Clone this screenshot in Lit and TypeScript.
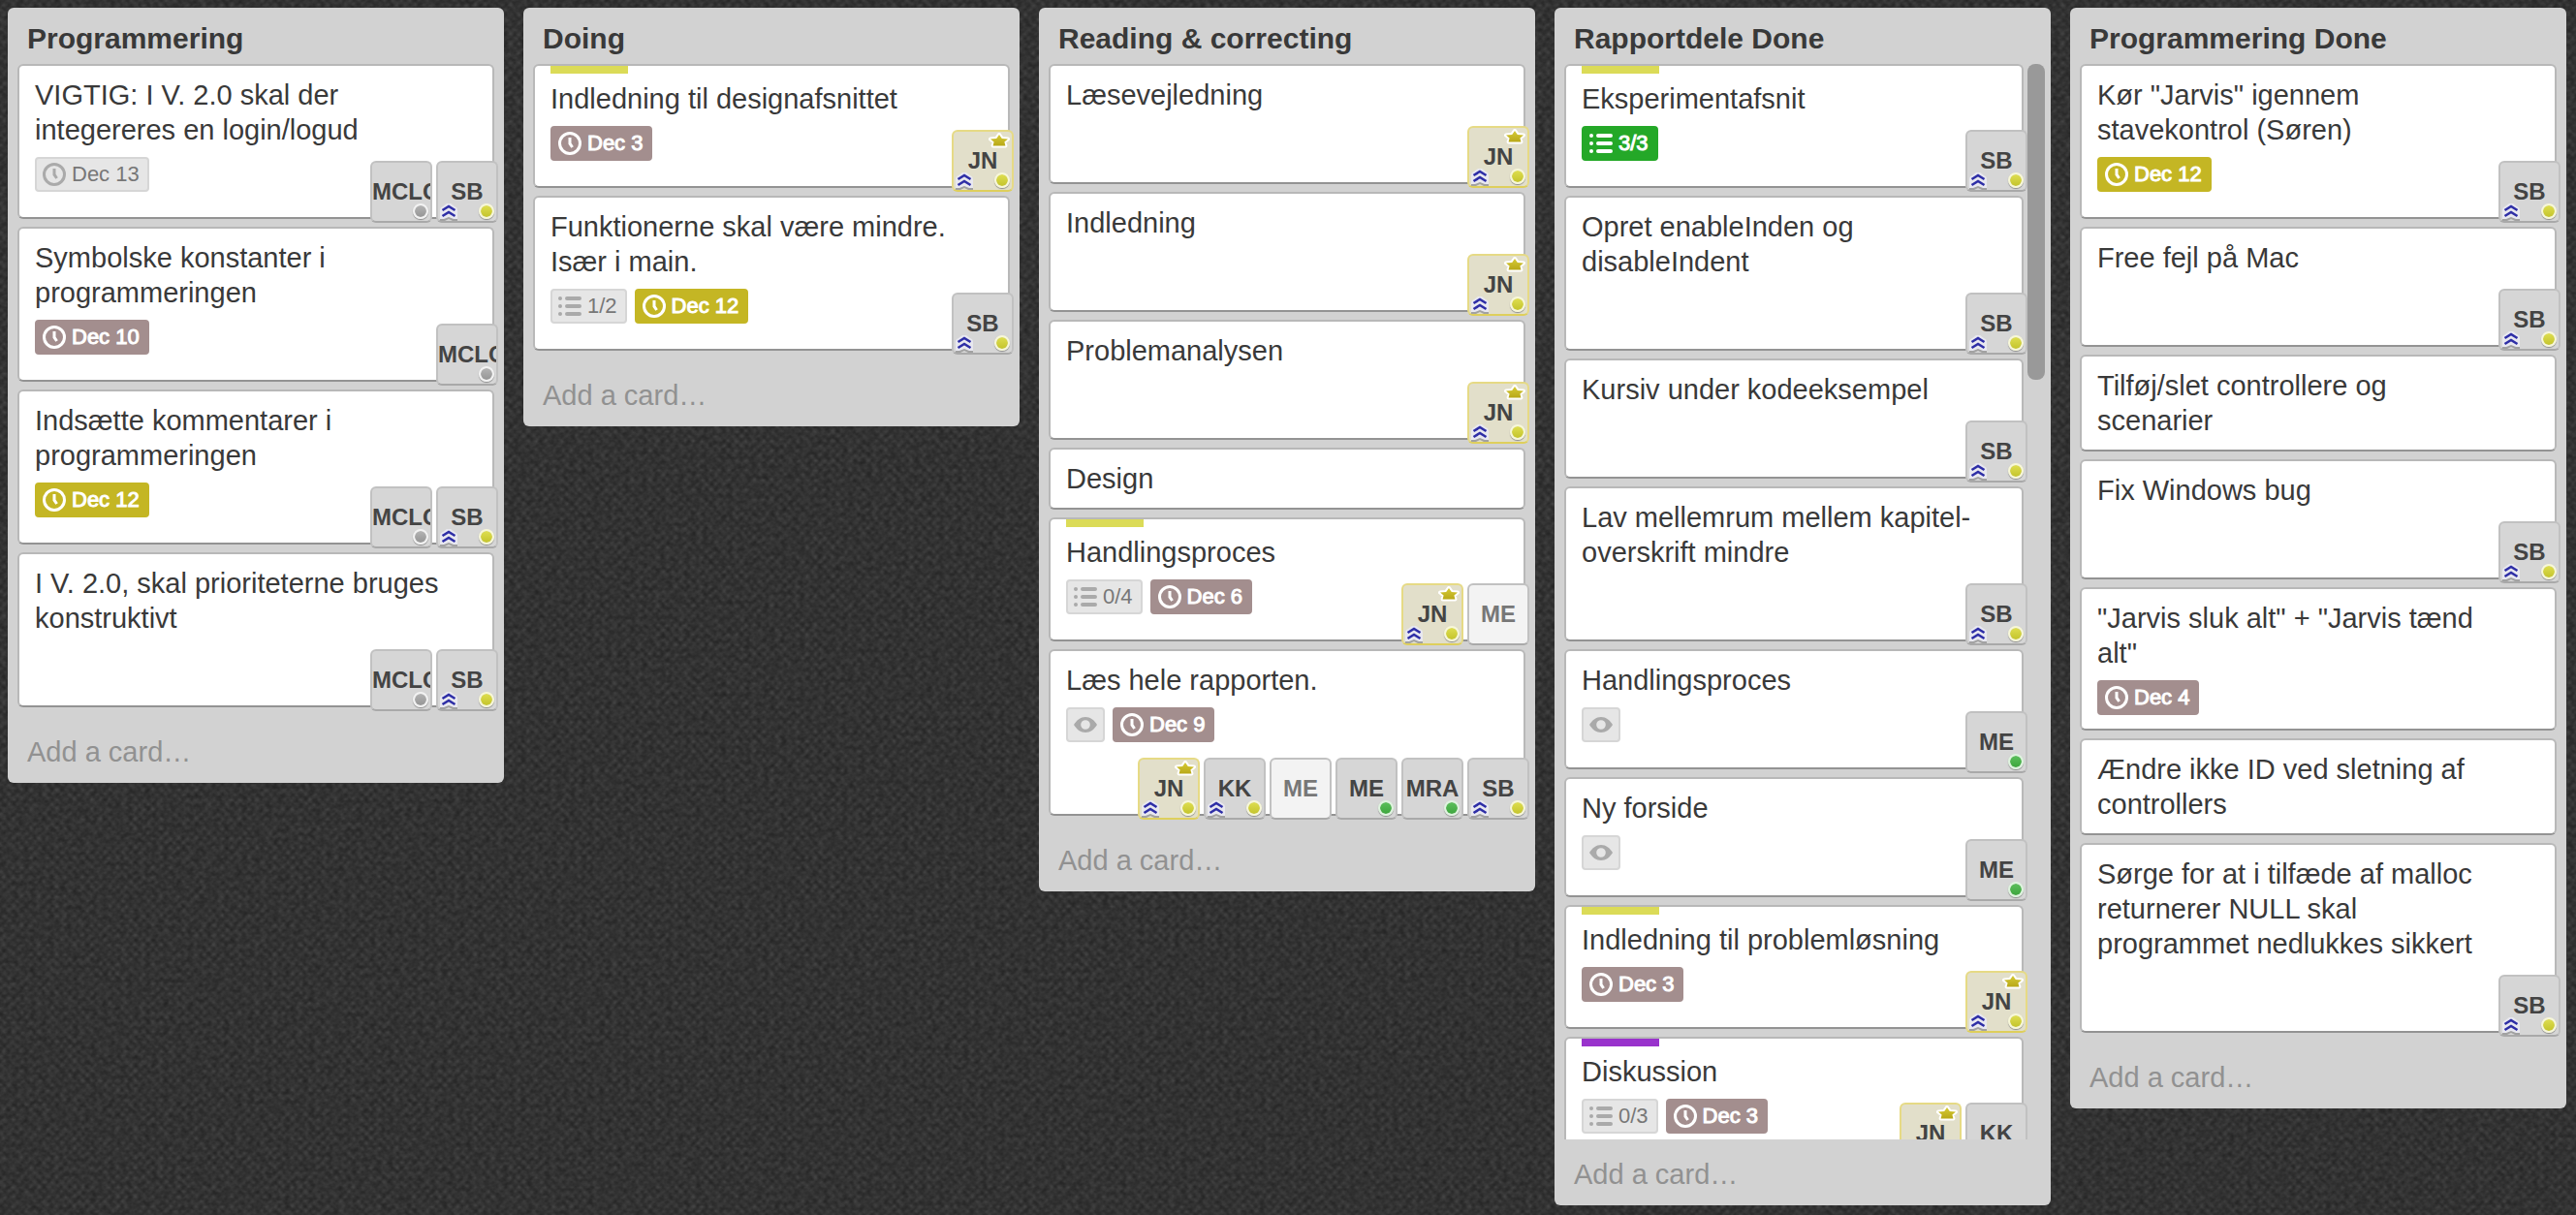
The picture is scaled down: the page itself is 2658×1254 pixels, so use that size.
import { LitElement, html, svg, css, nothing } from "lit";
import { customElement, property } from "lit/decorators.js";
import { classMap } from "lit/directives/class-map.js";

type Tone = "plain" | "past" | "soon" | "done";
type BadgeKind = "due" | "list" | "watch";

interface Badge {
  kind: BadgeKind;
  text?: string;
  tone: Tone;
}

interface Member {
  initials: string;
  dot?: "yellow" | "gray" | "green";
  admin?: boolean;
  gold?: boolean;
  pending?: boolean;
}

interface Card {
  title: string;
  label?: "yellow" | "purple";
  badges?: Badge[];
  members?: Member[];
}

interface List {
  name: string;
  scrolls?: boolean;
  cards: Card[];
}

const MCLC: Member = { initials: "MCLC", dot: "gray" };
const SB: Member = { initials: "SB", dot: "yellow", admin: true };
const JN: Member = { initials: "JN", dot: "yellow", admin: true, gold: true };
const KK: Member = { initials: "KK", dot: "yellow", admin: true };
const ME: Member = { initials: "ME", dot: "green" };
const ME_PENDING: Member = { initials: "ME", pending: true };
const MRA: Member = { initials: "MRA", dot: "green" };

const due = (text: string, tone: Tone): Badge => ({ kind: "due", text, tone });
const list = (text: string, tone: Tone = "plain"): Badge => ({ kind: "list", text, tone });
const watch: Badge = { kind: "watch", tone: "plain" };

const LISTS: List[] = [
  {
    name: "Programmering",
    cards: [
      { title: "VIGTIG: I V. 2.0 skal der integereres en login/logud", badges: [due("Dec 13", "plain")], members: [MCLC, SB] },
      { title: "Symbolske konstanter i programmeringen", badges: [due("Dec 10", "past")], members: [MCLC] },
      { title: "Indsætte kommentarer i programmeringen", badges: [due("Dec 12", "soon")], members: [MCLC, SB] },
      { title: "I V. 2.0, skal prioriteterne bruges konstruktivt", members: [MCLC, SB] },
    ],
  },
  {
    name: "Doing",
    cards: [
      { title: "Indledning til designafsnittet", label: "yellow", badges: [due("Dec 3", "past")], members: [JN] },
      { title: "Funktionerne skal være mindre. Især i main.", badges: [list("1/2"), due("Dec 12", "soon")], members: [SB] },
    ],
  },
  {
    name: "Reading & correcting",
    cards: [
      { title: "Læsevejledning", members: [JN] },
      { title: "Indledning", members: [JN] },
      { title: "Problemanalysen", members: [JN] },
      { title: "Design" },
      { title: "Handlingsproces", label: "yellow", badges: [list("0/4"), due("Dec 6", "past")], members: [JN, ME_PENDING] },
      { title: "Læs hele rapporten.", badges: [watch, due("Dec 9", "past")], members: [JN, KK, ME_PENDING, ME, MRA, SB] },
    ],
  },
  {
    name: "Rapportdele Done",
    scrolls: true,
    cards: [
      { title: "Eksperimentafsnit", label: "yellow", badges: [list("3/3", "done")], members: [SB] },
      { title: "Opret enableInden og disableIndent", members: [SB] },
      { title: "Kursiv under kodeeksempel", members: [SB] },
      { title: "Lav mellemrum mellem kapitel-overskrift mindre", members: [SB] },
      { title: "Handlingsproces", badges: [watch], members: [ME] },
      { title: "Ny forside", badges: [watch], members: [ME] },
      { title: "Indledning til problemløsning", label: "yellow", badges: [due("Dec 3", "past")], members: [JN] },
      { title: "Diskussion", label: "purple", badges: [list("0/3"), due("Dec 3", "past")], members: [JN, KK] },
    ],
  },
  {
    name: "Programmering Done",
    cards: [
      { title: 'Kør "Jarvis" igennem stavekontrol (Søren)', badges: [due("Dec 12", "soon")], members: [SB] },
      { title: "Free fejl på Mac", members: [SB] },
      { title: "Tilføj/slet controllere og scenarier" },
      { title: "Fix Windows bug", members: [SB] },
      { title: '"Jarvis sluk alt" + "Jarvis tænd alt"', badges: [due("Dec 4", "past")] },
      { title: "Ændre ikke ID ved sletning af controllers" },
      { title: "Sørge for at i tilfæde af malloc returnerer NULL skal programmet nedlukkes sikkert", members: [SB] },
    ],
  },
];

const GLYPHS = {
  due: svg`
    <circle cx="12" cy="12" r="10.5" fill="none" stroke="currentColor" stroke-width="3"/>
    <path d="M12 6V12.2L14.6 16" fill="none" stroke="currentColor" stroke-width="3"/>`,
  list: svg`
    <path d="M9 4H22M9 12H22M9 20H22" stroke="currentColor" stroke-width="4" stroke-linecap="round"/>
    <circle cx="2" cy="4" r="2" fill="currentColor"/>
    <circle cx="2" cy="12" r="2" fill="currentColor"/>
    <circle cx="2" cy="20" r="2" fill="currentColor"/>`,
  watch: svg`
    <path fill="currentColor" fill-rule="evenodd"
      d="M0 12C3 7 7 4 12 4S21 7 24 12C21 17 17 20 12 20S3 17 0 12ZM12 7.2A4.8 4.8 0 1 0 12 16.8A4.8 4.8 0 1 0 12 7.2Z"/>`,
};

@customElement("card-badge")
export class CardBadge extends LitElement {
  @property({ attribute: false }) badge!: Badge;

  static styles = css`
    :host { display: block; }
    .badge {
      box-sizing: border-box;
      display: flex;
      align-items: center;
      gap: 6px;
      height: 36px;
      padding: 0 8px 0 6px;
      border: 2px solid #d6d6d6;
      border-radius: 4px;
      background: #e6e6e6;
      color: #777;
      font-size: 22px;
      line-height: 32px;
      white-space: nowrap;
    }
    .watch { padding: 0 6px; }
    .icon { width: 24px; height: 24px; color: #aaa; flex: none; }
    .past, .soon, .done { color: #fff; -webkit-text-stroke: 1px #fff; }
    .past .icon, .soon .icon, .done .icon { color: #fff; }
    .past { background: #a38e8e; border-color: #a38e8e; }
    .soon { background: #c4b624; border-color: #c4b624; }
    .done { background: #24a828; border-color: #24a828; }
  `;

  render() {
    const { kind, tone, text } = this.badge;
    return html`
      <div class=${classMap({ badge: true, [tone]: true, [kind]: true })}>
        <svg class="icon" viewBox="0 0 24 24" aria-hidden="true">${GLYPHS[kind]}</svg>
        ${text ? html`<span>${text}</span>` : nothing}
      </div>`;
  }
}

@customElement("card-member")
export class CardMember extends LitElement {
  @property({ attribute: false }) member!: Member;

  static styles = css`
    :host { display: block; }
    .member {
      position: relative;
      display: block;
      box-sizing: border-box;
      width: 64px;
      height: 64px;
      margin: 0;
      padding: 0;
      border: 2px solid #c1c1c1;
      border-bottom-color: #a9a9a9;
      border-radius: 6px;
      background: #d6d6d6;
      color: #444;
      font: bold 24px/60px "Liberation Sans", Arial, sans-serif;
      cursor: pointer;
    }
    .initials { display: block; width: 60px; height: 60px; overflow: hidden; text-align: center; }
    .gold { background: #e2dfca; border-color: #e6da85; border-bottom-color: #decf5c; }
    .pending { background: #f3f3f3; color: #777; }
    .rank { position: absolute; left: 2px; bottom: -1px; width: 18px; height: 19px; }
    .star { position: absolute; right: 2px; top: 1px; width: 22px; height: 16px; }
    .dot {
      position: absolute;
      right: 2px;
      bottom: 2px;
      box-sizing: border-box;
      width: 16px;
      height: 16px;
      border: 2px solid #f7f7d8;
      border-radius: 50%;
      box-shadow: 0 1px 1px #8a8a8a;
    }
    .yellow { background: linear-gradient(#dede50, #c4c42c) padding-box; }
    .green { background: linear-gradient(#5bbf5b, #3ea63e) padding-box; border-color: #def3de; }
    .gray { background: linear-gradient(#b4b4b4, #969696) padding-box; border-color: #f2f2f2; }
  `;

  render() {
    const m = this.member;
    return html`
      <button type="button" class=${classMap({ member: true, gold: !!m.gold, pending: !!m.pending })}>
        <span class="initials">${m.initials}</span>
        ${m.gold
          ? html`<svg class="star" viewBox="0 0 22 16" aria-hidden="true">
              <defs>
                <linearGradient id="shine" x1="0" y1="0" x2="0" y2="1">
                  <stop offset="0" stop-color="#d6ca35" />
                  <stop offset="1" stop-color="#b8a818" />
                </linearGradient>
              </defs>
              <path
                d="M11 2L13.8 6L20 6.5L16.4 9.5L17.4 13.5H4.6L5.6 9.5L2 6.5L8.2 6Z"
                fill="none" stroke="#fff" stroke-width="4" stroke-linejoin="round" />
              <path d="M11 2L13.8 6L20 6.5L16.4 9.5L17.4 13.5H4.6L5.6 9.5L2 6.5L8.2 6Z" fill="url(#shine)" />
            </svg>`
          : nothing}
        ${m.admin
          ? html`<svg class="rank" viewBox="0 0 18 19" aria-hidden="true">
              <path d="M0 18V8L9 1L18 8V18L13 18L9 16L5 18Z" fill="#a2a2a2" />
              <path d="M0 16V7Q0 4 3 3L7 0H11L15 3Q18 4 18 7V16H14L9 14L4 16Z" fill="#e8e8f0" />
              <path d="M2.5 7L9 3L15.5 7M2.5 13L9 9L15.5 13" fill="none" stroke="#2e2ea6" stroke-width="2.6" />
            </svg>`
          : nothing}
        ${m.dot ? html`<span class=${classMap({ dot: true, [m.dot]: true })}></span>` : nothing}
      </button>`;
  }
}

@customElement("board-card")
export class BoardCard extends LitElement {
  @property({ attribute: false }) card!: Card;

  static styles = css`
    :host { display: block; }
    .card {
      padding: 0 16px 12px;
      border: 2px solid #b8b8b8;
      border-bottom-color: #939393;
      border-radius: 6px;
      background: #fff;
    }
    .staffed { padding-bottom: 0; }
    .label { width: 80px; height: 8px; }
    .yellow { background: #dbdb57; }
    .purple { background: #9933cc; }
    .title {
      display: block;
      padding: 12px 34px 0 0;
      color: #393939;
      font-size: 29px;
      line-height: 36px;
      text-decoration: none;
    }
    .label + .title { padding-top: 8px; }
    .foot { display: flex; flex-wrap: wrap; align-items: flex-start; }
    .badges { display: flex; gap: 8px; margin: 10px 0 2px; }
    .members { display: flex; gap: 4px; margin: 14px -22px -6px auto; }
  `;

  render() {
    const { title, label, badges, members } = this.card;
    return html`
      <article class=${classMap({ card: true, staffed: !!members })}>
        ${label ? html`<div class=${classMap({ label: true, [label]: true })}></div>` : nothing}
        <a class="title" href="#">${title}</a>
        ${badges || members
          ? html`<div class="foot">
              ${badges
                ? html`<div class="badges">${badges.map((b) => html`<card-badge .badge=${b}></card-badge>`)}</div>`
                : nothing}
              ${members
                ? html`<div class="members">${members.map((m) => html`<card-member .member=${m}></card-member>`)}</div>`
                : nothing}
            </div>`
          : nothing}
      </article>`;
  }
}

@customElement("board-list")
export class BoardList extends LitElement {
  @property({ attribute: false }) list!: List;

  static styles = css`
    :host { position: relative; display: flex; min-width: 0; max-height: 100%; }
    .list {
      flex: 1;
      min-width: 0;
      display: flex;
      flex-direction: column;
      border-radius: 6px;
      background: #d2d2d2;
    }
    .name {
      margin: 0;
      padding: 14px 20px 8px;
      color: #393939;
      font-size: 30px;
      font-weight: bold;
      line-height: 36px;
    }
    .body { position: relative; display: flex; flex: 0 1 auto; min-height: 0; }
    .cards {
      flex: 1;
      min-width: 0;
      box-sizing: border-box;
      display: flex;
      flex-direction: column;
      gap: 8px;
      padding: 0 10px 10px;
    }
    .scrolls .cards { overflow: hidden auto; scrollbar-width: none; margin-right: 24px; padding-right: 4px; }
    .thumb {
      position: absolute;
      top: 0;
      right: 6px;
      width: 18px;
      height: 326px;
      border-radius: 8px;
      background: #999;
    }
    .add {
      padding: 18px 20px 14px;
      border: 0;
      background: none;
      color: #919191;
      font: 29px/36px "Liberation Sans", Arial, sans-serif;
      text-align: left;
      cursor: pointer;
    }
  `;

  render() {
    const { name, cards, scrolls } = this.list;
    return html`
      <section class="list">
        <h2 class="name">${name}</h2>
        <div class=${classMap({ body: true, scrolls: !!scrolls })}>
          <div class="cards">${cards.map((c) => html`<board-card .card=${c}></board-card>`)}</div>
          ${scrolls ? html`<div class="thumb"></div>` : nothing}
        </div>
        <button type="button" class="add">Add a card…</button>
      </section>`;
  }
}

@customElement("app-root")
export class AppRoot extends LitElement {
  static styles = css`
    :host { display: block; }
    .board {
      position: relative;
      box-sizing: border-box;
      display: grid;
      grid-template-columns: repeat(5, minmax(0, 1fr));
      grid-template-rows: minmax(0, 1fr);
      align-items: start;
      gap: 20px;
      height: 100vh;
      padding: 8px 10px 10px 8px;
      overflow: hidden;
      font-family: "Liberation Sans", Arial, sans-serif;
      background-color: #2b2b2b;
      background-image:
        radial-gradient(circle at 50% 50%, #454545 0, #3c3c3c 2px, transparent 5px),
        radial-gradient(circle at 50% 50%, #424242 0, #3a3a3a 2px, transparent 5px);
      background-size: 9px 10px, 9px 10px;
      background-position: 0 0, 5px 5px;
    }
    .grain { position: absolute; inset: 0; width: 100%; height: 100%; }
  `;

  render() {
    return html`
      <main class="board">
        <svg class="grain" aria-hidden="true">
          <filter id="cloth" x="0" y="0" width="100%" height="100%" color-interpolation-filters="sRGB">
            <feTurbulence type="fractalNoise" baseFrequency="0.16 0.2" numOctaves="2" seed="4" />
            <feColorMatrix values="0 0 0 0 0.1  0 0 0 0 0.1  0 0 0 0 0.1  1 0 0 0 -0.3" />
          </filter>
          <rect width="100%" height="100%" filter="url(#cloth)" />
        </svg>
        ${LISTS.map((l) => html`<board-list .list=${l}></board-list>`)}
      </main>`;
  }
}
